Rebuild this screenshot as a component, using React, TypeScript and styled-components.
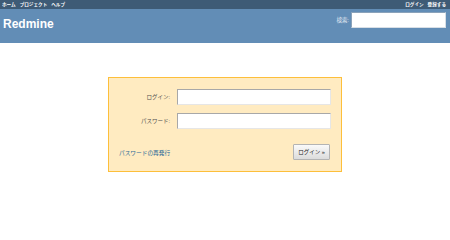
import * as React from "react";
import styled, { createGlobalStyle } from "styled-components";

const GlobalStyle = createGlobalStyle`
  html, body {
    margin: 0;
    padding: 0;
    background: #fff;
  }
  body {
    font-family: "Liberation Sans", "Noto Sans CJK JP", sans-serif;
    color: #484848;
  }
  * {
    box-sizing: border-box;
  }
`;

const TopMenu = styled.div`
  height: 9px;
  background: #3e5b76;
  display: flex;
  justify-content: space-between;
  align-items: center;
  padding: 0 4px 0 2px;
`;

const MenuList = styled.div`
  display: flex;
  gap: 4px;
`;

const MenuItem = styled.a`
  color: #fff;
  font-size: 4.6px;
  font-weight: bold;
  text-decoration: none;
  line-height: 9px;
  white-space: nowrap;
`;

const Header = styled.div`
  height: 34px;
  background: #628db6;
  display: flex;
  justify-content: space-between;
  align-items: flex-start;
  padding: 0 4px 0 3px;
`;

const Title = styled.h1`
  margin: 8px 0 0;
  font-size: 12px;
  line-height: 14px;
  font-weight: bold;
  color: #fff;
  font-family: "Liberation Sans", sans-serif;
`;

const Search = styled.div`
  display: flex;
  align-items: center;
  gap: 2px;
  margin-top: 3px;
`;

const SearchLabel = styled.span`
  color: #e4ebf3;
  font-size: 5.5px;
  white-space: nowrap;
`;

const SearchInput = styled.input`
  width: 95px;
  height: 16px;
  border: 1px solid;
  border-color: #8aa2ba #d8dfe6 #d8dfe6 #8aa2ba;
  background: #fff;
  padding: 0;
`;

const Content = styled.div`
  display: flex;
  justify-content: center;
  padding-top: 34px;
`;

const LoginBox = styled.form`
  width: 234px;
  background: #ffebc1;
  border: 1px solid #fdbf3b;
  padding: 11px 10px;
  display: flex;
  flex-direction: column;
`;

const Field = styled.div`
  display: grid;
  grid-template-columns: 51px 154px;
  column-gap: 7px;
  align-items: center;
  margin-bottom: 8px;
`;

const Label = styled.label`
  text-align: right;
  font-size: 5.5px;
  color: #505050;
  white-space: nowrap;
`;

const TextInput = styled.input`
  height: 16px;
  width: 154px;
  border: 1px solid;
  border-color: #a8a8a8 #e6e6e6 #e6e6e6 #a8a8a8;
  background: #fff;
  padding: 0;
`;

const Actions = styled.div`
  display: flex;
  justify-content: space-between;
  align-items: center;
  margin-top: 7px;
`;

const LostPassword = styled.a`
  color: #2a6a98;
  font-size: 5.7px;
  text-decoration: none;
  white-space: nowrap;
`;

const SubmitButton = styled.button`
  width: 37px;
  height: 16px;
  margin-right: 1px;
  padding: 0;
  font-family: "Liberation Sans", "Noto Sans CJK JP", sans-serif;
  font-size: 5.5px;
  color: #222;
  border: 1px solid #b4b4b4;
  border-radius: 1px;
  background: linear-gradient(to bottom, #fafafa, #dcdcdc);
  white-space: nowrap;
`;

export default function App() {
  return (
    <>
      <GlobalStyle />
      <TopMenu>
        <MenuList>
          <MenuItem href="#">ホーム</MenuItem>
          <MenuItem href="#">プロジェクト</MenuItem>
          <MenuItem href="#">ヘルプ</MenuItem>
        </MenuList>
        <MenuList>
          <MenuItem href="#">ログイン</MenuItem>
          <MenuItem href="#">登録する</MenuItem>
        </MenuList>
      </TopMenu>
      <Header>
        <Title>Redmine</Title>
        <Search>
          <SearchLabel>検索:</SearchLabel>
          <SearchInput type="text" />
        </Search>
      </Header>
      <Content>
        <LoginBox onSubmit={(e) => e.preventDefault()}>
          <Field>
            <Label>ログイン:</Label>
            <TextInput type="text" />
          </Field>
          <Field>
            <Label>パスワード:</Label>
            <TextInput type="password" />
          </Field>
          <Actions>
            <LostPassword href="#">パスワードの再発行</LostPassword>
            <SubmitButton type="submit">ログイン »</SubmitButton>
          </Actions>
        </LoginBox>
      </Content>
    </>
  );
}
